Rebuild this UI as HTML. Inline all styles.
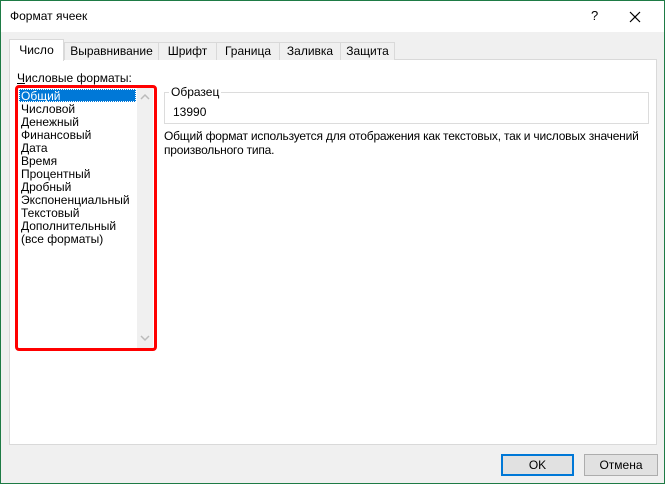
<!DOCTYPE html>
<html><head><meta charset="utf-8"><style>
*{margin:0;padding:0;box-sizing:border-box}
body{width:665px;height:484px;position:relative;font-family:"Liberation Sans",sans-serif;font-size:12px;color:#000;background:#f0f0f0;overflow:hidden}
.win{position:absolute;left:0;top:0;width:665px;height:484px;border:1px solid #1e7b45;background:#f0f0f0}
.title{position:absolute;left:0;top:0;width:663px;height:31px;background:#fff}
.abs{position:absolute;white-space:nowrap}
.tab{position:absolute;top:41px;height:18px;border:1px solid #d9d9d9;border-bottom:none;background:#f0f0f0;text-align:center;line-height:16px}
.panel{position:absolute;left:8px;top:58px;width:648px;height:386px;background:#fff;border:1px solid #d9d9d9}
.btn{position:absolute;top:453px;height:22px;background:#e1e1e1;border:1px solid #adadad;text-align:center;line-height:20px}
.li{position:absolute;left:20px;line-height:13px}
</style></head><body>
<div class="win">
<div class="title"></div>
<div class="abs" style="left:9px;top:8px;font-size:12px">Формат ячеек</div>
<div class="abs" style="left:590px;top:7px;font-size:13px">?</div>
<svg class="abs" style="left:628px;top:10px" width="12" height="12"><path d="M1 1L11 11M11 1L1 11" stroke="#000" stroke-width="1.2"/></svg>
<div class="panel"></div>
<div class="tab" style="left:63px;width:95px">Выравнивание</div>
<div class="tab" style="left:157px;width:59px">Шрифт</div>
<div class="tab" style="left:215px;width:64px">Граница</div>
<div class="tab" style="left:278px;width:62px">Заливка</div>
<div class="tab" style="left:339px;width:55px">Защита</div>
<div class="tab" style="left:8px;top:38px;width:55px;height:22px;background:#fff;line-height:20px;z-index:2">Число</div>
<div class="abs" style="left:16px;top:70px"><u>Ч</u>исловые форматы:</div>
<div class="abs" style="left:14px;top:84px;width:142px;height:266px;border:3px solid #f00;border-radius:4px;background:#fff"></div>
<div class="abs" style="left:136px;top:87px;width:16px;height:260px;background:#f0f0f0"></div>
<svg class="abs" style="left:139px;top:92px" width="10" height="8"><path d="M1 6L5 2L9 6" stroke="#bbb" stroke-width="1.5" fill="none"/></svg>
<svg class="abs" style="left:139px;top:333px" width="10" height="8"><path d="M1 2L5 6L9 2" stroke="#bbb" stroke-width="1.5" fill="none"/></svg>
<div class="abs" style="left:18px;top:88px;width:117px;height:13px;background:#0078d7;border:1px dotted #fff"></div>
<div class="li" style="top:89px;color:#fff">Общий</div>
<div class="li" style="top:102px">Числовой</div>
<div class="li" style="top:115px">Денежный</div>
<div class="li" style="top:128px">Финансовый</div>
<div class="li" style="top:141px">Дата</div>
<div class="li" style="top:154px">Время</div>
<div class="li" style="top:167px">Процентный</div>
<div class="li" style="top:180px">Дробный</div>
<div class="li" style="top:193px">Экспоненциальный</div>
<div class="li" style="top:206px">Текстовый</div>
<div class="li" style="top:219px">Дополнительный</div>
<div class="li" style="top:232px">(все форматы)</div>
<div class="abs" style="left:163px;top:91px;width:485px;height:32px;border:1px solid #dcdcdc"></div>
<div class="abs" style="left:168px;top:84px;background:#fff;padding:0 2px">Образец</div>
<div class="abs" style="left:172px;top:104px">13990</div>
<div class="abs" style="left:163px;top:128px;line-height:14px;letter-spacing:-0.2px">Общий формат используется для отображения как текстовых, так и числовых значений<br>произвольного типа.</div>
<div class="btn" style="left:500px;width:73px;border:2px solid #0078d7;line-height:18px">OK</div>
<div class="btn" style="left:583px;width:74px">Отмена</div>
</div>
</body></html>
